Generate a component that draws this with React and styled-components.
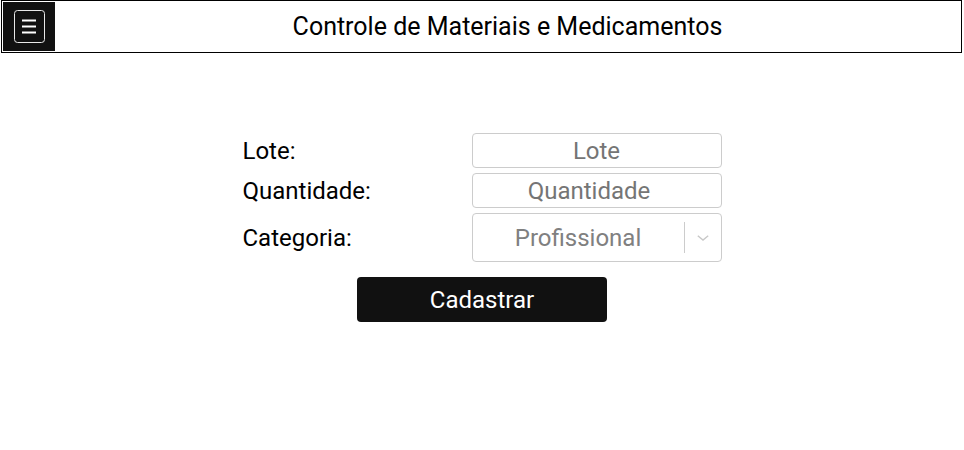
import React from 'react';
import styled, { createGlobalStyle } from 'styled-components';

const GlobalStyle = createGlobalStyle`
  body {
    margin: 0;
    font-family: Roboto, "Liberation Sans", sans-serif;
    background: #fff;
    color: #000;
  }
`;

const App = () => {
  return (
    <>
      <GlobalStyle />
      <Header>
        <MenuButton aria-label="menu">
          <MenuIcon viewBox="0 0 31 33" width="31" height="33">
            <rect x="0.5" y="0.5" width="30" height="32" rx="3" fill="none" stroke="#e8e8e8" strokeWidth="1" />
            <rect x="8" y="9.5" width="14" height="2" fill="#fff" />
            <rect x="8" y="15.5" width="14" height="2" fill="#fff" />
            <rect x="8" y="21.5" width="14" height="2" fill="#fff" />
          </MenuIcon>
        </MenuButton>
        <Title>Controle de Materiais e Medicamentos</Title>
      </Header>
      <Main>
        <Form onSubmit={(e) => e.preventDefault()}>
          <Label htmlFor="lote">Lote:</Label>
          <Input id="lote" placeholder="Lote" />
          <Label htmlFor="quantidade">Quantidade:</Label>
          <Input id="quantidade" type="number" placeholder="Quantidade" />
          <Label>Categoria:</Label>
          <Select>
            <SelectValue>Profissional</SelectValue>
            <Separator />
            <Chevron viewBox="0 0 12 6" width="12" height="6">
              <polyline points="0.8,0.8 6,5 11.2,0.8" fill="none" stroke="#c8c8c8" strokeWidth="1.4" />
            </Chevron>
          </Select>
          <SubmitButton type="submit">Cadastrar</SubmitButton>
        </Form>
      </Main>
    </>
  );
};

export default App;

const Header = styled.header`
  display: flex;
  align-items: center;
  margin: 0 2px 0 1px;
  padding: 1px;
  border: 1px solid #000;
`;

const MenuButton = styled.button`
  display: flex;
  align-items: center;
  justify-content: center;
  width: 52px;
  height: 49px;
  padding: 0;
  border: none;
  background: #111;
  cursor: pointer;
`;

const MenuIcon = styled.svg`
  display: block;
`;

const Title = styled.h1`
  flex: 1;
  margin: 0;
  text-align: center;
  font-size: 25px;
  font-weight: 400;
`;

const Main = styled.main`
  display: flex;
  justify-content: center;
  padding-top: 80px;
`;

const Form = styled.form`
  display: grid;
  grid-template-columns: 229px 250px;
  row-gap: 5px;
  align-items: center;
`;

const Label = styled.label`
  font-size: 24px;
`;

const Input = styled.input`
  box-sizing: border-box;
  width: 250px;
  height: 35px;
  padding: 0;
  border: 1px solid #ccc;
  border-radius: 4px;
  font-family: inherit;
  font-size: 24px;
  text-align: center;
  color: #333;
  outline: none;
  &::placeholder {
    color: #757575;
  }
`;

const Select = styled.div`
  box-sizing: border-box;
  display: flex;
  align-items: center;
  height: 49px;
  border: 1px solid #ccc;
  border-radius: 4px;
`;

const SelectValue = styled.div`
  flex: 1;
  text-align: center;
  font-size: 24px;
  color: #808080;
`;

const Separator = styled.span`
  width: 1px;
  height: 31px;
  background: #ccc;
`;

const Chevron = styled.svg`
  display: block;
  margin: 0 12px 0 12px;
`;

const SubmitButton = styled.button`
  grid-column: 1 / -1;
  justify-self: center;
  width: 250px;
  height: 45px;
  margin-top: 10px;
  border: none;
  border-radius: 4px;
  background: #111;
  color: #fff;
  font-family: inherit;
  font-size: 24px;
  cursor: pointer;
`;
